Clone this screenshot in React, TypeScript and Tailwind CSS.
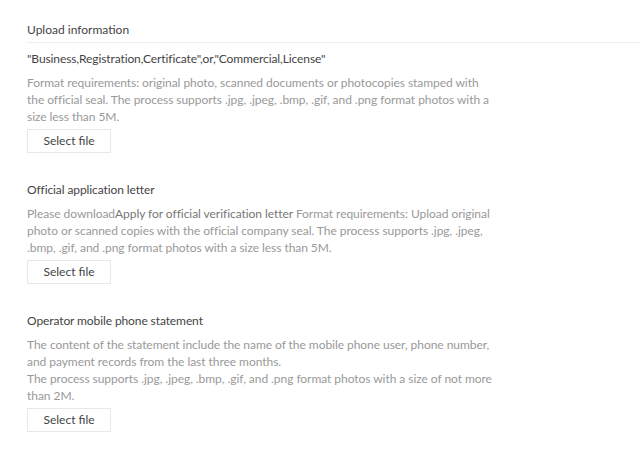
const sections = [
  {
    title: "\"Business,Registration,Certificate\",or,\"Commercial,License\"",
    body: (
      <>
        Format requirements: original photo, scanned documents or photocopies stamped with the
        official seal. The process supports .jpg, .jpeg, .bmp, .gif, and .png format photos with a
        size less than 5M.
      </>
    ),
  },
  {
    title: "Official application letter",
    body: (
      <>
        Please download<span className="text-[#777]">Apply for official verification letter</span>{" "}
        Format requirements: Upload original photo or scanned copies with the official company
        seal. The process supports .jpg, .jpeg, .bmp, .gif, and .png format photos with a size less
        than 5M.
      </>
    ),
  },
  {
    title: "Operator mobile phone statement",
    body: (
      <>
        The content of the statement include the name of the mobile phone user, phone number, and
        payment records from the last three months.
        <br />
        The process supports .jpg, .jpeg, .bmp, .gif, and .png format photos with a size of not
        more than 2M.
      </>
    ),
  },
];

const UploadInfo = () => {
  return (
    <div className="min-h-[450px] bg-white pl-[27px] pt-[20px] font-['Lato',sans-serif] text-[#444]">
      <div className="border-b border-[#eeeeee] pb-[2px] text-[12px] leading-[20px]">
        Upload information
      </div>

      <div className="flex flex-col gap-[27px] pt-[6px]">
        {sections.map((section) => (
          <div key={section.title}>
            <h3 className="text-[12px] leading-[20px] tracking-[-0.1px] text-[#444]">
              {section.title}
            </h3>
            <p className="mt-[5px] w-[466px] text-[12px] leading-[17px] tracking-[-0.05px] text-[#999]">
              {section.body}
            </p>
            <button className="mt-[4px] flex h-[24px] w-[84px] items-center justify-center border border-[#e8e8e8] bg-white text-[12px] text-[#444]">
              Select file
            </button>
          </div>
        ))}
      </div>
    </div>
  );
};

export default function App() {
  return <UploadInfo />;
}
